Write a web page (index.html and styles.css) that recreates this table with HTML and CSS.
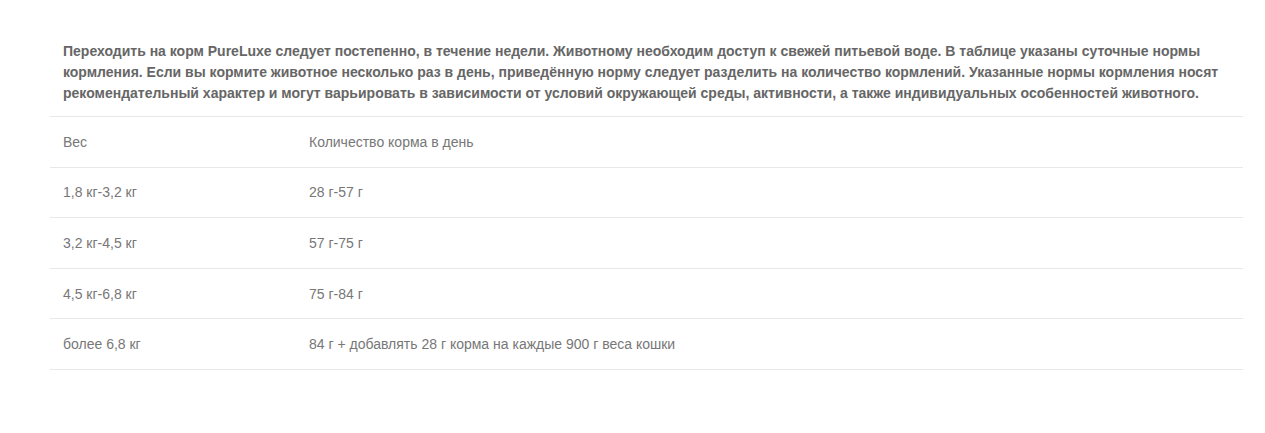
FILE: index.html
```html
<!DOCTYPE html>
<html lang="ru">
<head>
<meta charset="utf-8">
<link rel="stylesheet" href="styles.css">
</head>
<body>
<div class="wrap">
  <p class="intro">Переходить на корм PureLuxe следует постепенно, в течение недели. Животному необходим доступ к свежей питьевой воде. В таблице указаны суточные нормы кормления. Если вы кормите животное несколько раз в день, приведённую норму следует разделить на количество кормлений. Указанные нормы кормления носят рекомендательный характер и могут варьировать в зависимости от условий окружающей среды, активности, а также индивидуальных особенностей животного.</p>
  <table class="feed">
    <tr><td class="c1">Вес</td><td>Количество корма в день</td></tr>
    <tr><td class="c1">1,8 кг-3,2 кг</td><td>28 г-57 г</td></tr>
    <tr><td class="c1">3,2 кг-4,5 кг</td><td>57 г-75 г</td></tr>
    <tr><td class="c1">4,5 кг-6,8 кг</td><td>75 г-84 г</td></tr>
    <tr><td class="c1">более 6,8 кг</td><td>84 г + добавлять 28 г корма на каждые 900 г веса кошки</td></tr>
  </table>
</div>
</body>
</html>
```
FILE: styles.css
```css
html, body { margin: 0; padding: 0; background: #fff; }
body { font-family: "Liberation Sans", Arial, sans-serif; }
.wrap { margin: 0 22px 0 50px; padding-top: 31px; }
.intro {
  margin: 0;
  padding: 10px 13px 12px;
  font-size: 14px;
  line-height: 21px;
  font-weight: bold;
  color: #666;
  border-bottom: 1px solid #e8e8e8;
}
.feed { width: 100%; table-layout: fixed; border-collapse: collapse; font-size: 14px; color: #777; }
.feed td { height: 49.6px; padding: 0 13px; border-bottom: 1px solid #e8e8e8; vertical-align: middle; }
.feed .c1 { width: 220px; }
```
